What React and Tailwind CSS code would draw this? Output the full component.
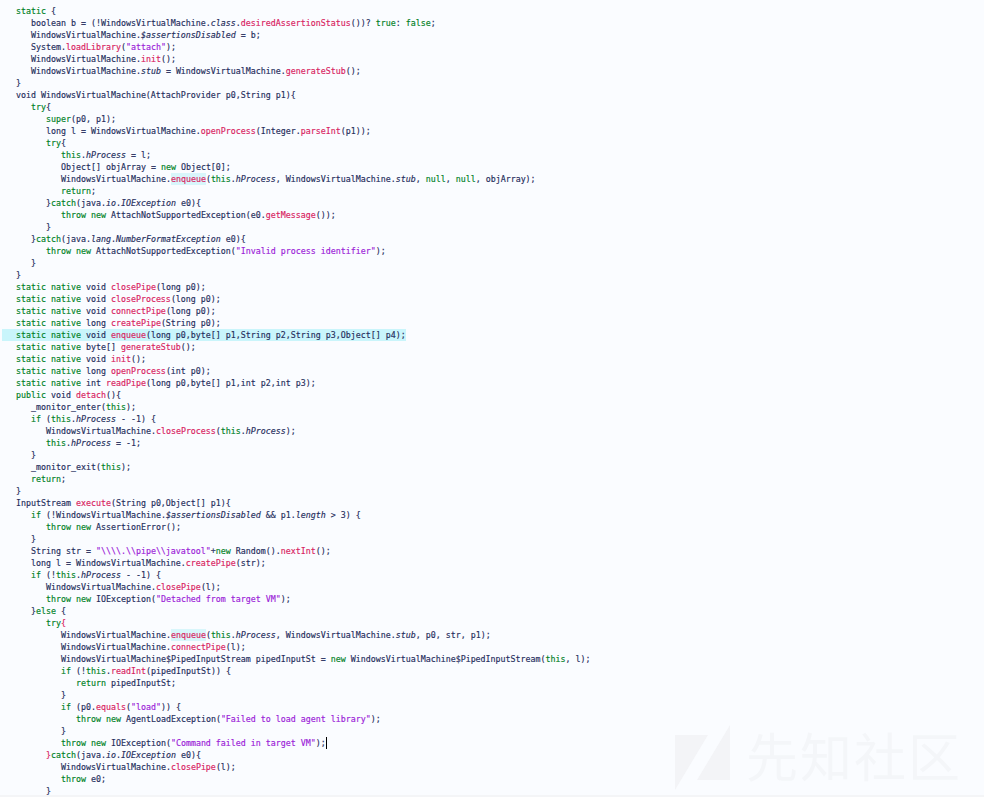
import React from "react";

// token kinds: k keyword, m method, s string, i italic field, h highlighted method, plain text otherwise
const k = (t) => ({ t, c: "text-[#007f26]" });
const m = (t) => ({ t, c: "text-[#d81b60]" });
const s = (t) => ({ t, c: "text-[#9a22d8]" });
const i = (t) => ({ t, c: "italic" });
const h = (t) => ({ t, c: "text-[#d81b60] bg-[#d8f6fb]" });

const WVM = "WindowsVirtualMachine";
const SN = "static native ";

const lines = [
  [0, k("static"), " {"],
  [1, "boolean b = (!" + WVM + ".", i("class"), ".", m("desiredAssertionStatus"), "())? ", k("true"), ": ", k("false"), ";"],
  [1, WVM + ".", i("$assertionsDisabled"), " = b;"],
  [1, "System.", m("loadLibrary"), "(", s('"attach"'), ");"],
  [1, WVM + ".", m("init"), "();"],
  [1, WVM + ".", i("stub"), " = " + WVM + ".", m("generateStub"), "();"],
  [0, "}"],
  [0, "void " + WVM + "(AttachProvider p0,String p1){"],
  [1, k("try"), "{"],
  [2, k("super"), "(p0, p1);"],
  [2, "long l = " + WVM + ".", m("openProcess"), "(Integer.", m("parseInt"), "(p1));"],
  [2, k("try"), "{"],
  [3, k("this"), ".", i("hProcess"), " = l;"],
  [3, "Object[] objArray = ", k("new"), " Object[0];"],
  [3, WVM + ".", h("enqueue"), "(", k("this"), ".", i("hProcess"), ", " + WVM + ".", i("stub"), ", ", k("null"), ", ", k("null"), ", objArray);"],
  [3, k("return"), ";"],
  [2, "}", k("catch"), "(java.", i("io"), ".", i("IOException"), " e0){"],
  [3, k("throw new"), " AttachNotSupportedException(e0.", m("getMessage"), "());"],
  [2, "}"],
  [1, "}", k("catch"), "(java.", i("lang"), ".", i("NumberFormatException"), " e0){"],
  [2, k("throw new"), " AttachNotSupportedException(", s('"Invalid process identifier"'), ");"],
  [1, "}"],
  [0, "}"],
  [0, k(SN), "void ", m("closePipe"), "(long p0);"],
  [0, k(SN), "void ", m("closeProcess"), "(long p0);"],
  [0, k(SN), "void ", m("connectPipe"), "(long p0);"],
  [0, k(SN), "long ", m("createPipe"), "(String p0);"],
  { active: true, parts: [0, k(SN), "void ", m("enqueue"), "(long p0,byte[] p1,String p2,String p3,Object[] p4);"] },
  [0, k(SN), "byte[] ", m("generateStub"), "();"],
  [0, k(SN), "void ", m("init"), "();"],
  [0, k(SN), "long ", m("openProcess"), "(int p0);"],
  [0, k(SN), "int ", m("readPipe"), "(long p0,byte[] p1,int p2,int p3);"],
  [0, k("public"), " void ", m("detach"), "(){"],
  [1, "_monitor_enter(", k("this"), ");"],
  [1, k("if"), " (", k("this"), ".", i("hProcess"), " - -1) {"],
  [2, WVM + ".", m("closeProcess"), "(", k("this"), ".", i("hProcess"), ");"],
  [2, k("this"), ".", i("hProcess"), " = -1;"],
  [1, "}"],
  [1, "_monitor_exit(", k("this"), ");"],
  [1, k("return"), ";"],
  [0, "}"],
  [0, "InputStream ", m("execute"), "(String p0,Object[] p1){"],
  [1, k("if"), " (!" + WVM + ".", i("$assertionsDisabled"), " && p1.", i("length"), " > 3) {"],
  [2, k("throw new"), " AssertionError();"],
  [1, "}"],
  [1, 'String str = ', s('"\\\\\\\\.\\\\pipe\\\\javatool"'), "+", k("new"), " Random().", m("nextInt"), "();"],
  [1, "long l = " + WVM + ".", m("createPipe"), "(str);"],
  [1, k("if"), " (!", k("this"), ".", i("hProcess"), " - -1) {"],
  [2, WVM + ".", m("closePipe"), "(l);"],
  [2, k("throw new"), " IOException(", s('"Detached from target VM"'), ");"],
  [1, "}", k("else"), " {"],
  [2, k("try"), m("{")],
  [3, WVM + ".", h("enqueue"), "(", k("this"), ".", i("hProcess"), ", " + WVM + ".", i("stub"), ", p0, str, p1);"],
  [3, WVM + ".", m("connectPipe"), "(l);"],
  [3, WVM + "$PipedInputStream pipedInputSt = ", k("new"), " " + WVM + "$PipedInputStream(", k("this"), ", l);"],
  [3, k("if"), " (!", k("this"), ".", m("readInt"), "(pipedInputSt)) {"],
  [4, k("return"), " pipedInputSt;"],
  [3, "}"],
  [3, k("if"), " (p0.", m("equals"), "(", s('"load"'), ")) {"],
  [4, k("throw new"), " AgentLoadException(", s('"Failed to load agent library"'), ");"],
  [3, "}"],
  { caret: true, parts: [3, k("throw new"), " IOException(", s('"Command failed in target VM"'), ");"] },
  [2, m("}"), k("catch"), "(java.", i("io"), ".", i("IOException"), " e0){"],
  [3, WVM + ".", m("closePipe"), "(l);"],
  [3, k("throw"), " e0;"],
  [2, "}"],
];

const indentClass = ["pl-0", "pl-[15px]", "pl-[30px]", "pl-[45px]", "pl-[60px]"];

const CodeLine = ({ line }) => {
  const parts = Array.isArray(line) ? line : line.parts;
  const [indent, ...tokens] = parts;
  return (
    <div className={line.active ? "ml-[2px] h-3 w-[404px] whitespace-pre bg-[#c9f5fb] pl-[14px]" : "h-3 whitespace-pre pl-[16px]"}>
      <div className={`flex h-3 items-center ${indentClass[indent]}`}>
        {tokens.map((tok, n) =>
          typeof tok === "string" ? (
            <span key={n}>{tok}</span>
          ) : (
            <span key={n} className={tok.c}>{tok.t}</span>
          )
        )}
        {line.caret && <span className="h-3 w-px bg-black" />}
      </div>
    </div>
  );
};

const App = () => {
  return (
    <div className="relative flex h-[797px] w-[984px] flex-col overflow-hidden bg-[#f4f5f7]">
      <div className="h-[795px] overflow-hidden bg-[#fafcff] pt-[5px] font-['DejaVu_Sans_Mono',monospace] text-[8.3px] leading-3 text-[#1f2d5c] [-webkit-text-stroke:0.15px]">
        {lines.map((line, n) => (
          <CodeLine key={n} line={line} />
        ))}
      </div>

      {/* watermark */}
      <div className="absolute left-[675px] top-[725px] flex items-start gap-[16px]">
        <svg width="55" height="65" viewBox="0 0 55 65" className="shrink-0">
          <path d="M0 10H33L0 65Z" fill="#f3f4f7" />
          <path d="M55 0V55H22Z" fill="#f3f4f7" />
        </svg>
        <span className="mt-[4px] font-['Noto_Sans_CJK_SC',sans-serif] text-[52px] leading-none tracking-[2px] text-[#f4f6f9]">
          先知社区
        </span>
      </div>
    </div>
  );
};

export default App;
